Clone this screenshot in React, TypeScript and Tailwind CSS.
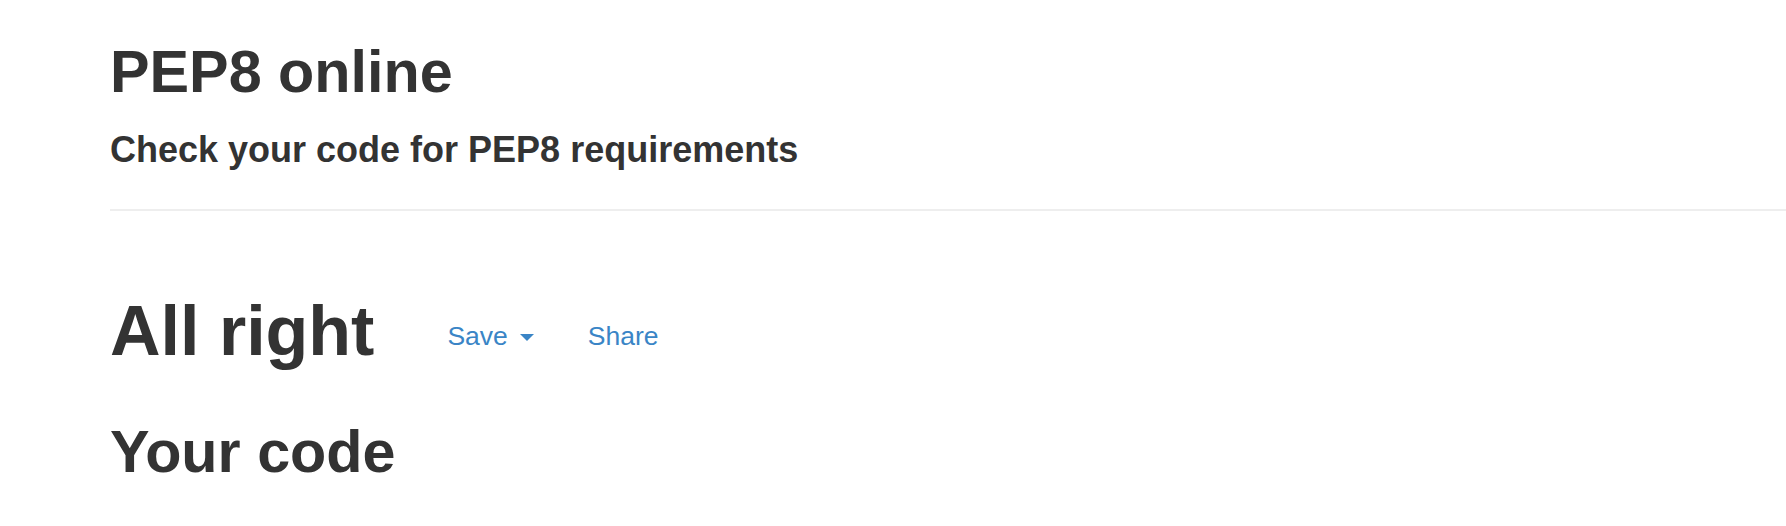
export default function App() {
  return (
    <div
      className="min-h-screen bg-white text-[#333333] pl-[110px] pt-[40px]"
      style={{ fontFamily: '"Liberation Sans", Arial, Helvetica, sans-serif' }}
    >
      <header>
        <h1 className="text-[59.3px] leading-[64px] font-bold">PEP8 online</h1>
        <h3 className="mt-[26px] text-[36px] leading-[40px] font-bold">
          Check your code for PEP8 requirements
        </h3>
      </header>

      <hr className="mt-[39px] h-[2px] border-0 bg-[#eeeeee]" />

      <main>
        <div className="mt-[82px] flex items-start">
          <h1 className="text-[70px] leading-[77px] font-bold">All right</h1>
          <nav className="mt-[28px] ml-[73px] flex items-center text-[26.5px] leading-[30px] text-[#3a85c6]">
            <a href="#" className="flex items-center">
              Save
              <span className="ml-[12px] mt-[2px] h-0 w-0 border-x-[7px] border-t-[7px] border-x-transparent border-t-[#3a85c6]" />
            </a>
            <a href="#" className="ml-[54px]">
              Share
            </a>
          </nav>
        </div>

        <h1 className="mt-[50px] text-[59.3px] leading-[64px] font-bold">Your code</h1>
      </main>
    </div>
  );
}
